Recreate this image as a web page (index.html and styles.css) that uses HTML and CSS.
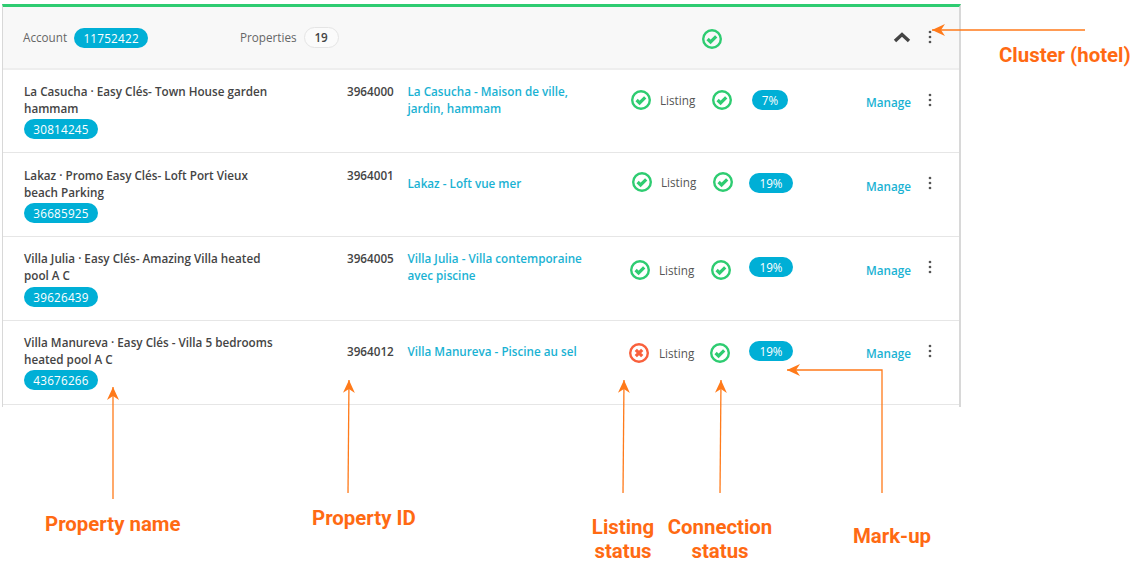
FILE: index.html
```html
<!DOCTYPE html>
<html lang="en">
<head>
<meta charset="utf-8">
<title>Cluster</title>
<link rel="stylesheet" href="styles.css">
</head>
<body>
<svg width="0" height="0" class="defs">
  <symbol id="ok" viewBox="0 0 20 20"><circle cx="10" cy="10" r="8.800" fill="none" stroke="#2ecc71" stroke-width="2.400"/><path d="M5.600 10l3 3 5.600-5.600" fill="none" stroke="#2ecc71" stroke-width="3.200"/></symbol>
  <symbol id="bad" viewBox="0 0 20 20"><circle cx="10" cy="10" r="8.800" fill="none" stroke="#f9603c" stroke-width="2.400"/><path d="M6.800 6.800l6.400 6.400M13.200 6.800l-6.400 6.400" fill="none" stroke="#f9603c" stroke-width="3.200"/></symbol>
  <symbol id="dots" viewBox="0 0 4 14"><circle cx="2" cy="2" r="1.350" fill="#555"/><circle cx="2" cy="7" r="1.350" fill="#555"/><circle cx="2" cy="12" r="1.350" fill="#555"/></symbol>
</svg>
<main class="card">
  <header class="head">
    <div class="head-account"><span class="muted">Account</span><span class="pill pill-account">11752422</span></div>
    <div class="head-props"><span class="muted">Properties</span><span class="count">19</span></div>
    <svg class="icon head-ok"><use href="#ok"/></svg>
    <svg class="chevron" viewBox="0 0 18 12"><path d="M2 10L9 3.500l7 6.500" fill="none" stroke="#444" stroke-width="3.400"/></svg>
    <svg class="dots head-dots"><use href="#dots"/></svg>
  </header>
  <section class="row row-1">
    <div class="name"><div>La Casucha · Easy Clés- Town House garden hammam</div><span class="pill pill-id">30814245</span></div>
    <div class="pid">3964000</div>
    <a class="title">La Casucha - Maison de ville, jardin, hammam</a>
    <div class="status"><svg class="icon listing"><use href="#ok"/></svg><span class="label">Listing</span><svg class="icon conn"><use href="#ok"/></svg><span class="pill markup markup-small">7%</span></div>
    <a class="manage">Manage</a>
    <svg class="dots"><use href="#dots"/></svg>
  </section>
  <section class="row row-2">
    <div class="name"><div>Lakaz · Promo Easy Clés- Loft Port Vieux beach Parking</div><span class="pill pill-id">36685925</span></div>
    <div class="pid">3964001</div>
    <a class="title">Lakaz - Loft vue mer</a>
    <div class="status"><svg class="icon listing"><use href="#ok"/></svg><span class="label">Listing</span><svg class="icon conn"><use href="#ok"/></svg><span class="pill markup">19%</span></div>
    <a class="manage">Manage</a>
    <svg class="dots"><use href="#dots"/></svg>
  </section>
  <section class="row row-3">
    <div class="name"><div>Villa Julia · Easy Clés- Amazing Villa heated pool A C</div><span class="pill pill-id">39626439</span></div>
    <div class="pid">3964005</div>
    <a class="title">Villa Julia - Villa contemporaine avec piscine</a>
    <div class="status"><svg class="icon listing"><use href="#ok"/></svg><span class="label">Listing</span><svg class="icon conn"><use href="#ok"/></svg><span class="pill markup">19%</span></div>
    <a class="manage">Manage</a>
    <svg class="dots"><use href="#dots"/></svg>
  </section>
  <section class="row row-4">
    <div class="name"><div>Villa Manureva · Easy Clés - Villa 5 bedrooms heated pool A C</div><span class="pill pill-id">43676266</span></div>
    <div class="pid">3964012</div>
    <a class="title">Villa Manureva - Piscine au sel</a>
    <div class="status"><svg class="icon listing"><use href="#bad"/></svg><span class="label">Listing</span><svg class="icon conn"><use href="#ok"/></svg><span class="pill markup">19%</span></div>
    <a class="manage">Manage</a>
    <svg class="dots"><use href="#dots"/></svg>
  </section>
</main>
<svg class="arrows" width="1143" height="570" viewBox="0 0 1143 570">
  <defs><marker id="tip" viewBox="0 0 14 12" refX="0" refY="6" markerWidth="14" markerHeight="12" markerUnits="userSpaceOnUse" orient="auto"><path d="M0 6L13 0l-4 6 4 6z" fill="#ff7a1a"/></marker></defs>
  <g fill="none" stroke="#ff7a1a" stroke-width="1.300" marker-start="url(#tip)">
    <path d="M113 387L113 499"/>
    <path d="M349 380L348 493"/>
    <path d="M624 380L623 493"/>
    <path d="M721 380L720 493"/>
    <path d="M787 370H882V493"/>
    <path d="M932 30H1085"/>
  </g>
</svg>
<div class="note note-cluster">Cluster (hotel)</div>
<div class="note note-name">Property name</div>
<div class="note note-id">Property ID</div>
<div class="note note-listing">Listing<br>status</div>
<div class="note note-conn">Connection<br>status</div>
<div class="note note-markup">Mark-up</div>
</body>
</html>
```
FILE: styles.css
```css
html, body { margin: 0; padding: 0; background: #fff; }
body {
  width: 1143px;
  height: 570px;
  overflow: hidden;
  position: relative;
  font-family: "Open Sans", "Liberation Sans", sans-serif;
  font-size: 11.7px;
  color: #444;
}
.defs { position: absolute; }
.card {
  box-sizing: border-box;
  width: 959px;
  height: 403px;
  margin: 4px 0 0 2px;
  background: #fff;
  border-top: 3px solid #2ecc71;
  border-left: 1px solid #d8d8d8;
  border-right: 2px solid #d8d8d8;
}
.head {
  box-sizing: border-box;
  height: 63px;
  display: flex;
  align-items: flex-start;
  background: #f8f8f8;
  border-bottom: 2px solid #eeeeee;
  color: #666;
}
.head-account { width: 217px; margin-left: 20px; margin-top: 20px; display: flex; align-items: center; gap: 7px; }
.head-props { width: 463px; margin-top: 20px; display: flex; align-items: center; gap: 7px; }
.muted { line-height: 21px; font-weight: 400; }
.count {
  box-sizing: border-box;
  width: 35px;
  height: 21px;
  line-height: 19px;
  text-align: center;
  border: 1px solid #e5e5e5;
  border-radius: 11px;
  background: #fbfbfb;
  color: #444;
  font-weight: 600;
}
.pill {
  display: inline-block;
  height: 20px;
  line-height: 20px;
  border-radius: 10px;
  background: #00afd6;
  color: #fff;
  text-align: center;
  font-weight: 600;
}
.pill-account { width: 74px; font-weight: 400; letter-spacing: .25px; }
.pill-id { width: 74px; font-weight: 400; display: block; margin-top: 2px; letter-spacing: .25px; }
.icon { width: 20px; height: 20px; flex: none; display: block; }
.head-ok { margin-top: 22px; margin-left: -1px; }
.chevron { width: 18px; height: 12px; margin-top: 24px; margin-left: 171px; flex: none; }
.dots { width: 4px; height: 14px; flex: none; display: block; }
.head-dots { margin-top: 23px; margin-left: 17px; }
.row {
  box-sizing: border-box;
  height: 84px;
  display: flex;
  align-items: flex-start;
  padding: 13px 0 0 21px;
  border-bottom: 1px solid #e6e6e6;
  line-height: 17px;
}
.name { width: 323px; flex: none; font-weight: 600; color: #444; }
.name > div { width: 258px; }
.pid { width: 60.5px; flex: none; font-weight: 600; color: #444; }
.title { box-sizing: border-box; width: 220.5px; padding-right: 38px; flex: none; font-weight: 600; color: #1ab2d3; }
.row-2 .title { margin-top: 8px; }
.row-4 .title, .row-4 .pid { margin-top: 9px; }
.status { width: 238px; flex: none; display: flex; align-items: flex-start; padding-left: var(--left); box-sizing: border-box; }
.listing { margin-top: var(--icon); }
.conn { margin-top: var(--conn); }
.label { width: 36px; margin-left: 9px; margin-right: 16px; margin-top: var(--label); font-weight: 400; color: #555; white-space: nowrap; flex: none; }
.markup { width: 44px; margin-left: var(--gap); margin-top: var(--pill); font-weight: 500; flex: none; }
.markup-small { width: 36px; }
.manage { width: 62px; flex: none; margin-top: var(--manage); font-weight: 600; color: #1ab2d3; }
.row .dots { margin-top: var(--dots); }
.row-1 { height: 83px; --icon: 7px; --conn: 7px; --label: 9px; --pill: 7px; --manage: 11px; --dots: 10px; --left: 3px; --gap: 20px; }
.row-2 { padding-top: 14px; --icon: 5px; --conn: 5px; --label: 7px; --pill: 6px; --manage: 11px; --dots: 9px; --left: 4px; --gap: 16px; }
.row-3 { --icon: 10px; --conn: 10px; --label: 12px; --pill: 7px; --manage: 12px; --dots: 10px; --left: 2px; --gap: 18px; }
.row-3 .pill-id { margin-top: 3px; }
.row-4 { --icon: 9px; --conn: 9px; --label: 11px; --pill: 7px; --manage: 11px; --dots: 10px; --left: 1px; --gap: 19px; }
.row-4 .label { margin-left: 10px; margin-right: 15px; }
.arrows { position: absolute; left: 0; top: 0; pointer-events: none; }
.note {
  position: absolute;
  font-family: Roboto, "Liberation Sans", sans-serif;
  font-weight: 700;
  font-size: 20.4px;
  line-height: 24px;
  color: #ff6a13;
  white-space: nowrap;
}
.note-cluster { left: 999px; top: 43px; }
.note-name { left: 45px; top: 512px; }
.note-id { left: 312px; top: 506px; }
.note-listing { left: 573px; width: 100px; top: 515px; text-align: center; }
.note-conn { left: 660px; width: 120px; top: 515px; text-align: center; }
.note-markup { left: 853px; top: 524px; }
```
